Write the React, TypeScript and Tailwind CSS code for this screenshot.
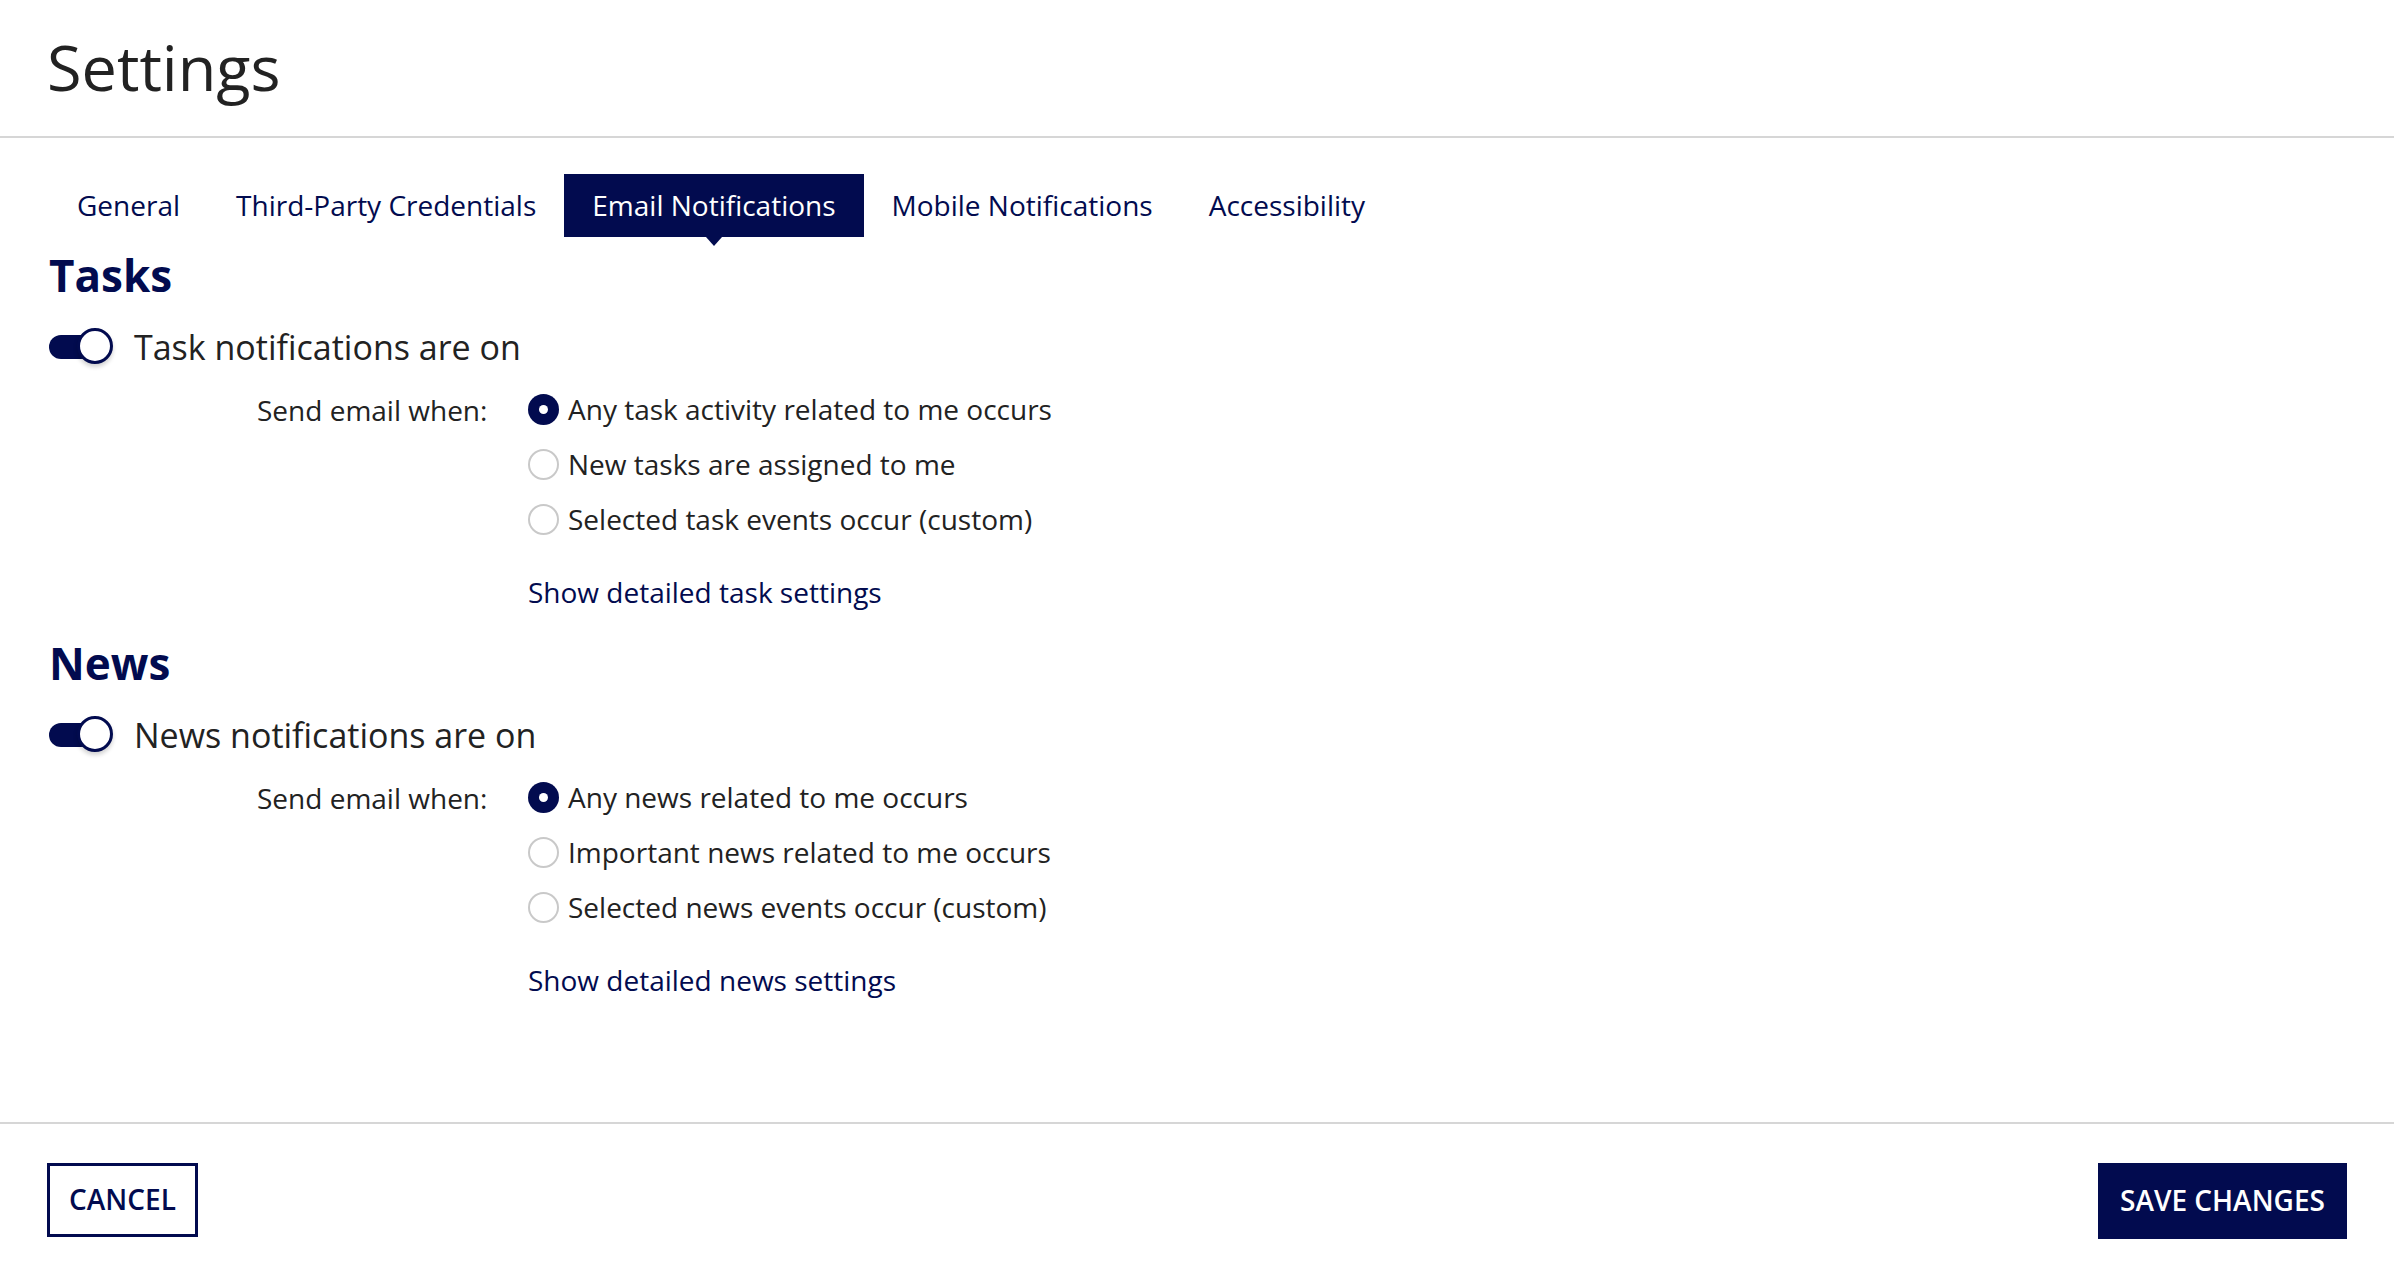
import { useState } from 'react'

const NAVY = '#020b4f'

const tabs = ['General', 'Third-Party Credentials', 'Email Notifications', 'Mobile Notifications', 'Accessibility']

interface SectionProps {
  title: string
  toggleLabel: string
  options: string[]
  linkLabel: string
}

function Toggle({ on, onChange }: { on: boolean; onChange: () => void }) {
  return (
    <button onClick={onChange} className="relative h-[37px] w-[64px] shrink-0" aria-pressed={on}>
      <span
        className={`absolute left-0 top-1/2 h-[24px] w-[44px] -translate-y-1/2 rounded-full ${on ? 'bg-[#020b4f]' : 'bg-[#c8c8c8]'}`}
      />
      <span
        className={`absolute top-0 h-[36px] w-[36px] rounded-full border-[3px] bg-white shadow-[0_3px_4px_rgba(0,0,0,0.18)] ${on ? 'left-[28px] border-[#020b4f]' : 'left-0 border-[#c8c8c8]'}`}
      />
    </button>
  )
}

function Radio({ checked }: { checked: boolean }) {
  return checked ? (
    <span className="flex h-[31px] w-[31px] shrink-0 items-center justify-center rounded-full bg-[#020b4f]">
      <span className="h-[9px] w-[9px] rounded-full bg-white" />
    </span>
  ) : (
    <span className="h-[31px] w-[31px] shrink-0 rounded-full border-2 border-[#c9c9c9] bg-white" />
  )
}

function Section({ title, toggleLabel, options, linkLabel }: SectionProps) {
  const [on, setOn] = useState(true)
  const [selected, setSelected] = useState(0)

  return (
    <section className="flex flex-col">
      <h2 className="h-[52px] text-[44px] font-bold leading-[52px] text-[#020b4f]">{title}</h2>

      {/* Master toggle */}
      <div className="mt-[27px] flex h-[37px] items-center gap-[21px]">
        <Toggle on={on} onChange={() => setOn(!on)} />
        <span className="text-[34px] leading-none text-[#222]">{toggleLabel}</span>
      </div>

      {/* Delivery options */}
      <div className="mt-[24px] flex">
        <div className="w-[479px] pl-[208px] pt-[1px] text-[28px] leading-[40px] text-[#222]">Send email when:</div>
        <div className="flex flex-col">
          {options.map((opt, i) => (
            <label
              key={opt}
              onClick={() => setSelected(i)}
              className="flex h-[55px] cursor-pointer items-start gap-[9px] pt-[5px] text-[28px] leading-[32px] text-[#222]"
            >
              <Radio checked={selected === i} />
              <span className="-mt-[1px]">{opt}</span>
            </label>
          ))}
          <a href="#" className="mt-[18px] text-[28px] leading-[40px] text-[#020b4f]">
            {linkLabel}
          </a>
        </div>
      </div>
    </section>
  )
}

export default function App() {
  const [active, setActive] = useState(2)

  return (
    <div className="flex h-[1272px] w-full flex-col bg-white font-['Open_Sans',sans-serif]" style={{ color: '#222' }}>
      {/* Page header */}
      <header className="flex h-[138px] shrink-0 items-center border-b-2 border-[#d6d6d6] px-[47px]">
        <h1 className="-mt-[3px] text-[63px] font-normal leading-none text-[#222]">Settings</h1>
      </header>

      {/* Tab strip */}
      <nav className="mt-[36px] flex px-[49px]">
        {tabs.map((t, i) => (
          <button
            key={t}
            onClick={() => setActive(i)}
            className={`relative flex h-[63px] items-center px-[28px] pb-[2px] text-[28px] ${active === i ? 'bg-[#020b4f] text-white' : 'text-[#020b4f]'}`}
          >
            {t}
            {active === i && (
              <span className="absolute left-1/2 top-full h-0 w-0 -translate-x-1/2 border-x-[8px] border-t-[9px] border-x-transparent border-t-[#020b4f]" />
            )}
          </button>
        ))}
      </nav>

      <main className="flex flex-1 flex-col gap-[25px] px-[49px] pt-[12px]">
        <Section
          title="Tasks"
          toggleLabel="Task notifications are on"
          options={['Any task activity related to me occurs', 'New tasks are assigned to me', 'Selected task events occur (custom)']}
          linkLabel="Show detailed task settings"
        />
        <Section
          title="News"
          toggleLabel="News notifications are on"
          options={['Any news related to me occurs', 'Important news related to me occurs', 'Selected news events occur (custom)']}
          linkLabel="Show detailed news settings"
        />
      </main>

      {/* Footer actions */}
      <footer className="flex h-[150px] shrink-0 items-start justify-between border-t-2 border-[#d6d6d6] px-[47px] pt-[39px]">
        <button className="h-[74px] w-[151px] border-[3px] pb-[2px] text-[28px] font-semibold text-[#020b4f]" style={{ borderColor: NAVY }}>
          CANCEL
        </button>
        <button className="h-[76px] w-[249px] bg-[#020b4f] pb-[2px] text-[28px] font-semibold text-white">SAVE CHANGES</button>
      </footer>
    </div>
  )
}
